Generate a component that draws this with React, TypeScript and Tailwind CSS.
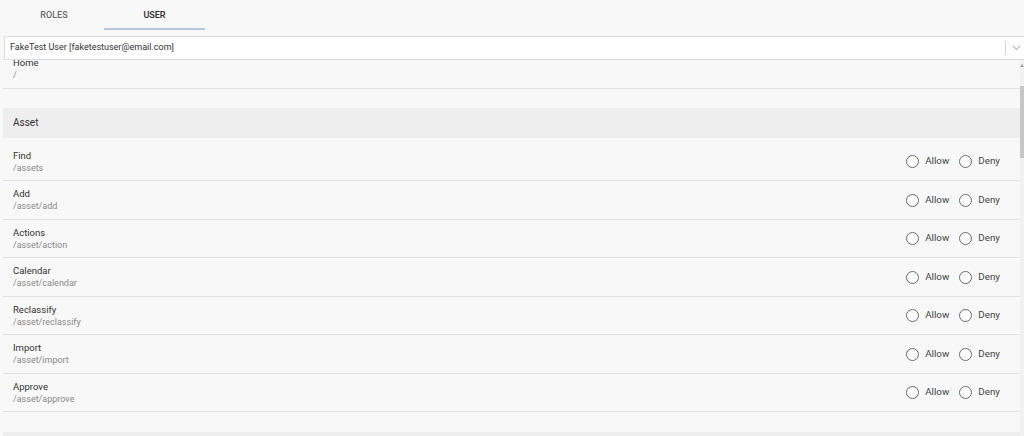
import React from "react";

type Perm = { title: string; path: string };

const assetPerms: Perm[] = [
  { title: "Find", path: "/assets" },
  { title: "Add", path: "/asset/add" },
  { title: "Actions", path: "/asset/action" },
  { title: "Calendar", path: "/asset/calendar" },
  { title: "Reclassify", path: "/asset/reclassify" },
  { title: "Import", path: "/asset/import" },
  { title: "Approve", path: "/asset/approve" },
];

function Radio({ label }: { label: string }) {
  return (
    <label className="flex items-center gap-[6px] cursor-pointer">
      <span className="w-[13px] h-[13px] rounded-full border-[1.5px] border-[#6b6b6b] bg-white" />
      <span className="text-[9.8px] text-[#444]">{label}</span>
    </label>
  );
}

function PermRow({ perm, radios = true }: { perm: Perm; radios?: boolean }) {
  return (
    <div className="h-[38.5px] flex items-center border-b border-[#e3e3e3] px-[10px]">
      <div className="flex flex-col leading-[13px] pt-[1px]">
        <span className="text-[9.5px] text-[#333]">{perm.title}</span>
        <span className="text-[9px] text-[#8a8a8a]">{perm.path}</span>
      </div>
      {radios && (
        <div className="ml-auto flex items-center gap-[10px] pr-[10px] pt-[1px]">
          <Radio label="Allow" />
          <Radio label="Deny" />
        </div>
      )}
    </div>
  );
}

export default function App() {
  return (
    <div
      className="w-[1024px] h-[436px] overflow-hidden bg-[#f8f8f8] flex flex-col"
      style={{ fontFamily: "Roboto, 'Liberation Sans', sans-serif" }}
    >
      {/* tabs */}
      <div className="flex h-[30px] pl-[4px] shrink-0">
        <div className="w-[100px] flex items-center justify-center text-[9px] font-medium text-[#6a6a6a] pt-[2px]">
          ROLES
        </div>
        <div className="w-[101px] flex items-center justify-center text-[9px] font-semibold text-[#333] border-b-2 border-[#b4c6df] pt-[3px]">
          USER
        </div>
      </div>

      {/* user select */}
      <div className="mt-[6px] ml-[4px] w-[1028px] h-[24px] bg-white border border-[#dcdcdc] flex items-center shrink-0 relative z-10">
        <span className="pl-[5px] text-[9px] text-[#333]">FakeTest User [faketestuser@email.com]</span>
        <span className="ml-auto w-px h-[14px] bg-[#d6d6d6]" />
        <svg className="ml-[6px] mr-[10px]" width="9" height="6" viewBox="0 0 9 6" fill="none">
          <path d="M1 1l3.5 3.5L8 1" stroke="#bdbdbd" strokeWidth="1.2" />
        </svg>
      </div>

      {/* permissions list */}
      <div className="flex flex-1 min-h-0">
        <div className="flex-1 overflow-hidden pl-[3px]">
          <div className="-mt-[10px]">
            <PermRow perm={{ title: "Home", path: "/" }} radios={false} />

            <div className="mt-[19px] h-[30px] bg-[#eeeeee] flex items-center px-[10px] text-[10px] text-[#333]">
              Asset
            </div>
            <div className="pt-[5px]">
              {assetPerms.map((p) => (
                <PermRow key={p.path} perm={p} />
              ))}
            </div>

            <div className="mt-[20px] h-[30px] bg-[#eeeeee]" />
          </div>
        </div>

        {/* scrollbar */}
        <div className="w-[4px] bg-[#f1f1f1] flex flex-col items-center">
          <div className="mt-[4px] w-0 h-0 border-l-[2px] border-r-[2px] border-b-[3px] border-l-transparent border-r-transparent border-b-[#a0a0a0]" />
          <div className="mt-[19px] w-[4px] h-[72px] bg-[#c6c6c6]" />
        </div>
      </div>
    </div>
  );
}
